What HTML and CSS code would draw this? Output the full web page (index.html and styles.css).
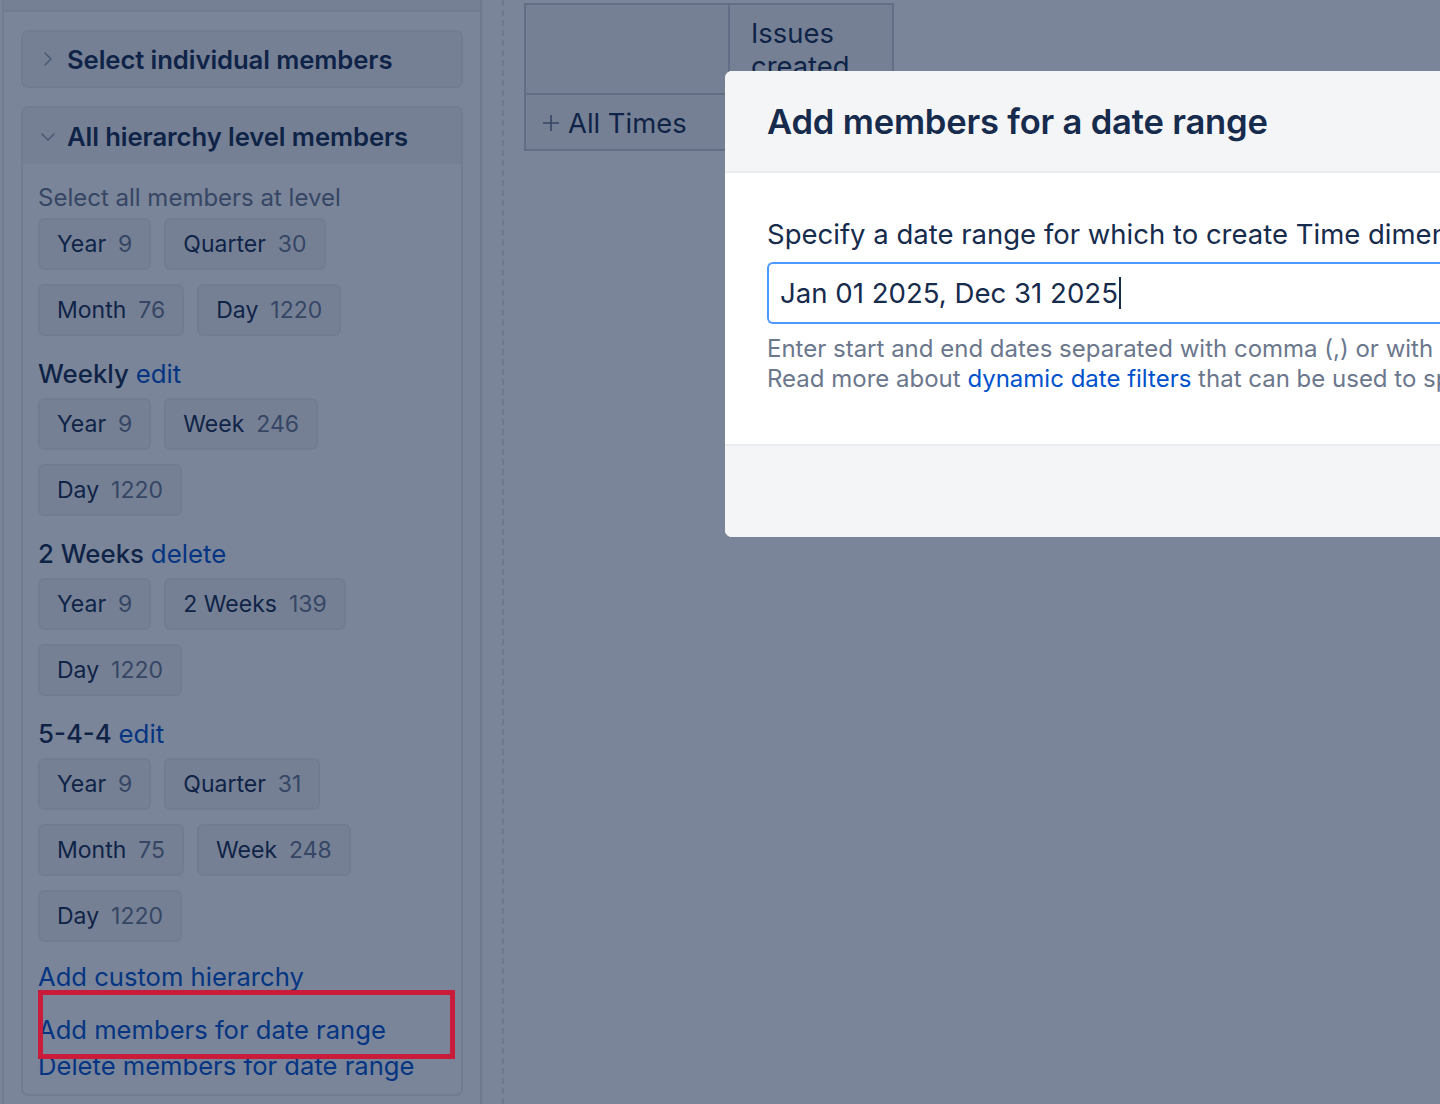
FILE: index.html
```html
<!DOCTYPE html>
<html lang="en">
<head>
<meta charset="utf-8">
<title>Add members for a date range</title>
<link rel="stylesheet" href="styles.css">
</head>
<body>
<div class="app">
  <aside class="sidebar">
    <div class="sidebar-top"></div>
    <div class="sidebar-content">
      <section class="acc">
        <div class="acc-head">
          <svg class="chev" width="14" height="16" viewBox="0 0 14 16"><path d="M4 2 L10 8 L4 14" fill="none" stroke="#97a0af" stroke-width="1.6" stroke-linecap="round" stroke-linejoin="round"/></svg>
          <span>Select individual members</span>
        </div>
      </section>
      <section class="acc acc-open">
        <div class="acc-head">
          <svg class="chev chev-down" width="16" height="14" viewBox="0 0 16 14"><path d="M2 4 L8 10 L14 4" fill="none" stroke="#97a0af" stroke-width="1.6" stroke-linecap="round" stroke-linejoin="round"/></svg>
          <span>All hierarchy level members</span>
        </div>
        <div class="acc-body">
          <div class="hint">Select all members at level</div>
          <div class="chips">
            <span class="chip">Year<b>9</b></span><span class="chip">Quarter<b>30</b></span>
            <span class="chip">Month<b>76</b></span><span class="chip">Day<b>1220</b></span>
          </div>
          <div class="group-title">Weekly <a href="#">edit</a></div>
          <div class="chips">
            <span class="chip">Year<b>9</b></span><span class="chip">Week<b>246</b></span>
            <span class="chip">Day<b>1220</b></span>
          </div>
          <div class="group-title">2 Weeks <a href="#">delete</a></div>
          <div class="chips">
            <span class="chip">Year<b>9</b></span><span class="chip">2 Weeks<b>139</b></span>
            <span class="chip">Day<b>1220</b></span>
          </div>
          <div class="group-title">5-4-4 <a href="#">edit</a></div>
          <div class="chips">
            <span class="chip">Year<b>9</b></span><span class="chip">Quarter<b>31</b></span>
            <span class="chip">Month<b>75</b></span><span class="chip">Week<b>248</b></span>
            <span class="chip">Day<b>1220</b></span>
          </div>
          <div class="links">
            <a href="#" class="link">Add custom hierarchy</a>
            <a href="#" class="link link-add">Add members for date range</a>
            <a href="#" class="link">Delete members for date range</a>
          </div>
        </div>
      </section>
    </div>
  </aside>
  <div class="divider"></div>
  <main class="main">
    <table class="grid">
      <tr><th class="c1"></th><th class="c2">Issues created</th></tr>
      <tr><td class="c1"><span class="cell"><svg class="plus" width="18" height="18" viewBox="0 0 18 18"><path d="M9 1 V17 M1 9 H17" stroke="#6b778c" stroke-width="1.6" fill="none"/></svg>All Times</span></td><td class="c2"></td></tr>
    </table>
  </main>
</div>

<div class="blanket"></div>
<div class="highlight"></div>

<div class="modal">
  <div class="modal-head"><h1>Add members for a date range</h1></div>
  <div class="modal-body">
    <label class="field-label">Specify a date range for which to create Time dimension members</label>
    <div class="input"><span>Jan 01 2025, Dec 31 2025</span><i class="caret"></i></div>
    <p class="help">Enter start and end dates separated with comma (,) or with dash (-).<br>Read more about <a href="#">dynamic date filters</a> that can be used to specify relative dates.</p>
  </div>
  <div class="modal-foot"></div>
</div>
</body>
</html>
```

FILE: styles.css
```css
* { box-sizing: border-box; }
html, body { margin: 0; padding: 0; }
body {
  width: 1440px;
  height: 1104px;
  overflow: hidden;
  position: relative;
  background: #ffffff;
  font-family: Inter, "Noto Sans", "Liberation Sans", sans-serif;
  color: #172b4d;
}
a { color: #0052cc; text-decoration: none; }

.app { display: flex; height: 1104px; }

.sidebar {
  margin-left: 2px;
  width: 480px;
  flex: none;
  border-left: 2px solid #ebecf0;
  border-right: 2px solid #e4e6ea;
  display: flex;
  flex-direction: column;
}
.sidebar-top { height: 12px; background: #f4f5f7; border-bottom: 2px solid #ebecf0; }
.sidebar-content { padding: 18px 17px 0 17px; display: flex; flex-direction: column; gap: 18px; }

.acc { border: 2px solid #ebecf0; border-radius: 7px; overflow: hidden; }
.acc-head {
  height: 54px;
  background: #f4f5f7;
  display: flex;
  align-items: center;
  padding-left: 18px;
  font-size: 25.7px;
  font-weight: 600;
  letter-spacing: -0.1px;
}
.chev { flex: none; margin-right: 12px; }
.chev-down { margin-left: -1px; margin-right: 11px; margin-top: 2px; }
.acc-open .acc-head { height: 56px; }
.acc-body { padding: 0 15px 10px 15px; }

.hint { font-size: 24px; line-height: 30px; color: #6b778c; margin-top: 19px; margin-bottom: 5px; }

.chips { display: flex; flex-wrap: wrap; column-gap: 13px; row-gap: 14px; width: 330px; }
.chip {
  height: 52px;
  display: inline-flex;
  align-items: center;
  padding: 0 17px;
  background: #f4f5f7;
  border: 2px solid #ebecf0;
  border-radius: 6px;
  font-size: 23px;
  color: #172b4d;
}
.chip b { font-weight: 400; color: #6b778c; margin-left: 12px; }

.group-title { font-size: 25.8px; font-weight: 500; line-height: 30px; margin-top: 23px; margin-bottom: 9px; }
.group-title a { font-weight: 400; }

.links { display: flex; flex-direction: column; margin-top: 17px; }
.link { font-size: 25.6px; line-height: 36px; }
.link-add { margin-top: 17px; }

.divider { width: 0; margin-left: 20px; border-left: 2px dashed #e1e4e9; flex: none; }

.main { padding: 3px 0 0 20px; }
.grid { border-collapse: collapse; font-size: 27.4px; }
.grid th, .grid td { border: 2px solid #c9ced6; background: #f4f5f7; padding: 0; }
.grid th { font-weight: 400; height: 90px; vertical-align: top; text-align: left; }
.grid td { height: 56px; }
.grid .c1 { width: 204px; padding-left: 16px; }
.grid .c2 { width: 164px; padding-left: 21px; }
.grid th.c2 { padding-top: 12px; line-height: 33px; }
.cell { display: inline-flex; align-items: center; }
.plus { margin-right: 8px; }

.blanket { position: absolute; inset: 0; background: rgba(9, 30, 66, 0.54); }

.highlight {
  position: absolute;
  left: 38px;
  top: 990px;
  width: 417px;
  height: 69px;
  border: 5.5px solid #c81c3a;
}

.modal {
  position: absolute;
  left: 725px;
  top: 71px;
  width: 900px;
  height: 466px;
  background: #ffffff;
  border-radius: 7px;
  overflow: hidden;
  display: flex;
  flex-direction: column;
}
.modal-head {
  height: 102px;
  background: #f4f5f7;
  border-bottom: 2px solid #ebecf0;
  display: flex;
  align-items: center;
  padding-left: 42px;
  flex: none;
}
.modal-head h1 { margin: 0; font-size: 34.6px; font-weight: 600; letter-spacing: -0.2px; }
.modal-body { padding: 44px 0 0 42px; flex: none; height: 271px; }
.field-label { display: block; font-size: 27.5px; line-height: 34px; white-space: nowrap; }
.input {
  margin-top: 11px;
  height: 62px;
  border: 2px solid #4c9aff;
  border-right: none;
  border-radius: 6px 0 0 6px;
  display: flex;
  align-items: center;
  padding-left: 11px;
  font-size: 27.6px;
  width: 860px;
}
.caret { display: inline-block; width: 2px; height: 32px; background: #172b4d; margin-left: 1px; }
.help { margin: 10px 0 0 0; font-size: 24px; line-height: 30px; color: #6b778c; white-space: nowrap; }
.modal-foot { flex: 1; background: #f4f5f7; border-top: 2px solid #ebecf0; }
```
